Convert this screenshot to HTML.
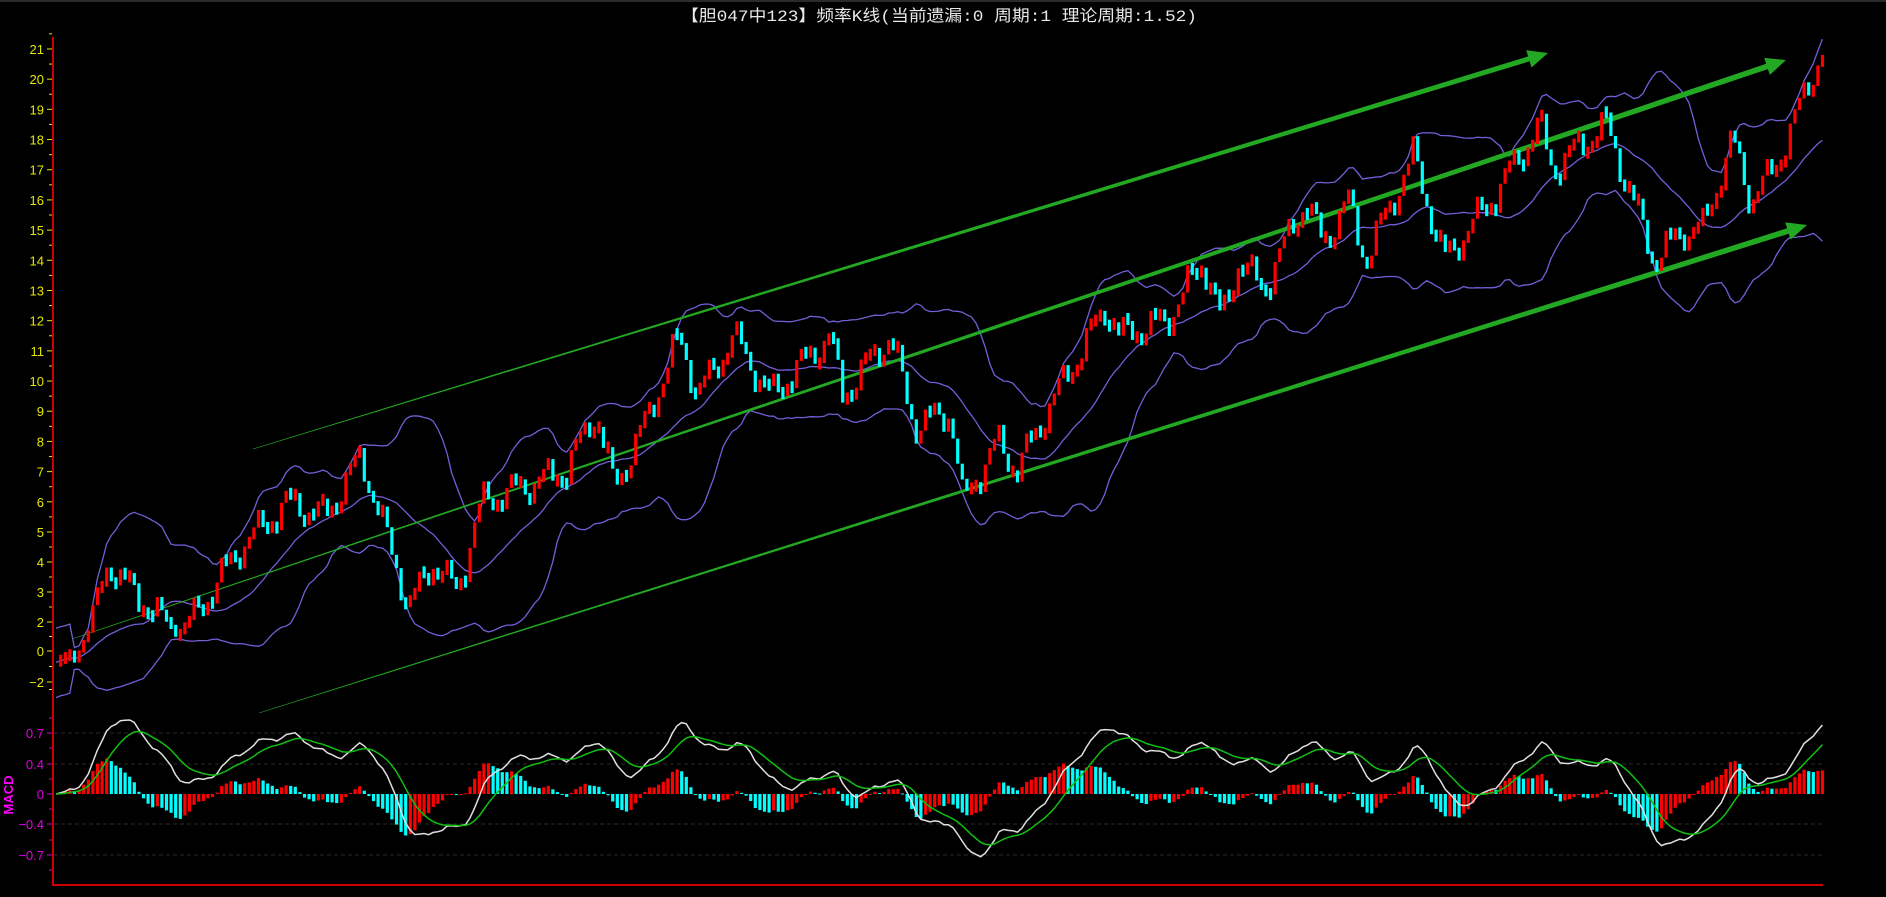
<!DOCTYPE html>
<html><head><meta charset="utf-8">
<style>
html,body{margin:0;padding:0;background:#000;overflow:hidden}
svg{display:block}
</style></head>
<body>
<svg id="c" width="1886" height="897" xmlns="http://www.w3.org/2000/svg">
<rect width="1886" height="897" fill="#000"/>
<rect width="1886" height="2" fill="#2a2a2a"/>
<text x="939" y="21" fill="#e8e8e8" font-family="'Liberation Mono','Noto Sans CJK SC',monospace" font-size="16" text-anchor="middle" textLength="516" lengthAdjust="spacingAndGlyphs">【胆047中123】频率K线(当前遗漏:0 周期:1 理论周期:1.52)</text>
<g id="g"></g>
</svg>
<script>
(function(){
var g=document.getElementById('g'),out=[];
function yv(v){
  if(v>=5) return 532-(v-5)*30.19;
  var pts=[[-3,697],[-2,682],[0,651],[2,622],[3,592],[4,562],[5,532]];
  for(var i=0;i<pts.length-1;i++){if(v<=pts[i+1][0]){var a=pts[i],b=pts[i+1];return a[1]+(v-a[0])/(b[0]-a[0])*(b[1]-a[1]);}}
  return 697;
}
var K=[[45,-1],[60,-0.5],[90,4],[110,3],[150,1.5],[200,4.5],[240,6],[270,5.5],[300,7.5],[340,2.5],[360,4],[380,3],[400,6],[470,7],[495,9],[510,6.5],[530,8],[565,11.5],[580,9.5],[610,11.5],[640,9.5],[690,11.5],[700,9.5],[740,11.5],[760,8.5],[790,9],[800,6],[830,8],[845,7],[870,9],[920,12.5],[930,11.5],[970,12],[1000,14],[1015,12],[1030,14],[1050,13],[1085,16],[1100,14.5],[1120,16],[1135,14],[1175,17.5],[1200,14],[1240,16],[1280,18.5],[1290,17],[1335,18.5],[1375,14],[1400,15],[1415,15],[1440,18],[1455,16],[1475,17],[1515,21]];
var S=1.203;
function base(x){var d=x/S;for(var i=0;i<K.length-1;i++){if(d<=K[i+1][0]){var a=K[i],b=K[i+1];return a[1]+(d-a[0])/(b[0]-a[0])*(b[1]-a[1]);}}return K[K.length-1][1];}
var xs=[],vs=[];
for(var x=56,i=0;x<=1823;x+=4.6,i++){xs.push(x);vs.push(base(x)+0.45*Math.sin(i*0.9)+0.25*Math.sin(i*2.3+1));}
var n=vs.length;
out.push('<line x1="53" y1="37" x2="53" y2="886" stroke="#d00000" stroke-width="2"/>');
out.push('<line x1="53" y1="885" x2="1823" y2="885" stroke="#d00000" stroke-width="2"/>');
var labs=[21,20,19,18,17,16,15,14,13,12,11,10,9,8,7,6,5,4,3,2,0,-2];
labs.forEach(function(l){var y=yv(l);out.push('<line x1="47" y1="'+y+'" x2="52" y2="'+y+'" stroke="#e6e600"/>');
 out.push('<text x="44" y="'+(y+5)+'" fill="#e6e600" font-family="Liberation Sans,sans-serif" font-size="13" text-anchor="end">'+(l<0?'\u2212'+(-l):l)+'</text>');});
for(var v=21.5;v>5;v-=1){var y=yv(v);out.push('<line x1="49" y1="'+y+'" x2="52" y2="'+y+'" stroke="#e6e600"/>');}
[4.5,3.5,2.5,1,-1,-2.5].forEach(function(v){var y=yv(v);out.push('<line x1="49" y1="'+y+'" x2="52" y2="'+y+'" stroke="#e6e600"/>');});
var P=20,mid=[],up=[],lo=[];
for(var i=0;i<n;i++){var s=0,c=0;for(var j=Math.max(0,i-P+1);j<=i;j++){s+=vs[j];c++;}var m=s/c,q=0;for(var j=Math.max(0,i-P+1);j<=i;j++)q+=(vs[j]-m)*(vs[j]-m);var sd=Math.sqrt(q/c);if(c<5)sd=Math.max(sd,1);mid.push(m);up.push(m+2*sd+0.3);lo.push(m-2*sd-0.3);}
function pl(arr,col,w){var d='';for(var i=0;i<n;i++)d+=(i?'L':'M')+xs[i].toFixed(1)+' '+yv(arr[i]).toFixed(1);out.push('<path d="'+d+'" fill="none" stroke="'+col+'" stroke-width="'+w+'"/>');}
pl(up,'#7060d8',1.3);pl(mid,'#7060d8',1.3);pl(lo,'#7060d8',1.3);
function trend(x1,y1,x2,y2,w){var dx=x2-x1,dy=y2-y1,L=Math.sqrt(dx*dx+dy*dy),ux=dx/L,uy=dy/L,nx=-uy,ny=ux;
 var hx=x2-ux*20,hy=y2-uy*20;
 var p=[[x1+nx*0.3,y1+ny*0.3],[hx+nx*w,hy+ny*w],[hx+nx*9,hy+ny*9],[x2,y2],[hx-nx*9,hy-ny*9],[hx-nx*w,hy-ny*w],[x1-nx*0.3,y1-ny*0.3]];
 out.push('<polygon points="'+p.map(function(a){return a[0].toFixed(1)+','+a[1].toFixed(1)}).join(' ')+'" fill="#22a822"/>');}
trend(253,449,1548,53,2.6);trend(72,639,1786,60,2.8);trend(259,713,1807,225,2.8);
for(var i=1;i<n;i++){var a=vs[i-1],b=vs[i],upC=b>=a;var y1=yv(Math.max(a,b)),y2=yv(Math.min(a,b));if(y2-y1<12){var c=(y1+y2)/2;y1=c-6;y2=c+6;}
 out.push('<rect x="'+(xs[i]-1.5).toFixed(1)+'" y="'+y1.toFixed(1)+'" width="3.2" height="'+(y2-y1).toFixed(1)+'" fill="'+(upC?'#ff0000':'#00ffff')+'"/>');}
function ema(arr,p){var k=2/(p+1),r=[arr[0]];for(var i=1;i<arr.length;i++)r.push(r[i-1]+k*(arr[i]-r[i-1]));return r;}
var e1=ema(vs,12),e2=ema(vs,26),dif=e1.map(function(v,i){return v-e2[i]}),dea=ema(dif,9);
var mx=0;dif.forEach(function(v){mx=Math.max(mx,Math.abs(v))});var sc=0.85/mx,Y0=794,pu=87;
[[0.7,733],[0.4,764],[0,794],[-0.4,824],[-0.7,855]].forEach(function(l){
 if(l[0]!==0)out.push('<line x1="54" y1="'+l[1]+'" x2="1823" y2="'+l[1]+'" stroke="#2a2a2a" stroke-dasharray="4,3"/>');
 out.push('<line x1="47" y1="'+l[1]+'" x2="52" y2="'+l[1]+'" stroke="#d000d0"/>');
 out.push('<text x="44" y="'+(l[1]+5)+'" fill="#e000e0" font-family="Liberation Sans,sans-serif" font-size="13" text-anchor="end">'+(l[0]<0?'\u2212'+(-l[0]):l[0])+'</text>');});
[718,748,779,809,840,870].forEach(function(y){out.push('<line x1="49" y1="'+y+'" x2="52" y2="'+y+'" stroke="#d000d0"/>');});
out.push('<text transform="translate(13,795) rotate(-90)" fill="#ff00ff" font-family="Liberation Sans,sans-serif" font-weight="bold" font-size="13" text-anchor="middle">MACD</text>');
for(var i=1;i<n;i++){var h=(dif[i]-dea[i])*1.2*sc,hp=(dif[i-1]-dea[i-1])*1.2*sc;var red=h>hp;var y=Y0-h*pu;
 out.push('<rect x="'+(xs[i]-1.5).toFixed(1)+'" y="'+Math.min(y,Y0).toFixed(1)+'" width="3.2" height="'+Math.max(1,Math.abs(y-Y0)).toFixed(1)+'" fill="'+(red?'#ff0000':'#00ffff')+'"/>');}
function mp(arr,col){var d='';for(var i=0;i<n;i++)d+=(i?'L':'M')+xs[i].toFixed(1)+' '+(Y0-arr[i]*sc*pu).toFixed(1);out.push('<path d="'+d+'" fill="none" stroke="'+col+'" stroke-width="1.5"/>');}
mp(dif,'#e0e0e0');mp(dea,'#10c010');
g.innerHTML=out.join('');
})();
</script>
</body></html>
